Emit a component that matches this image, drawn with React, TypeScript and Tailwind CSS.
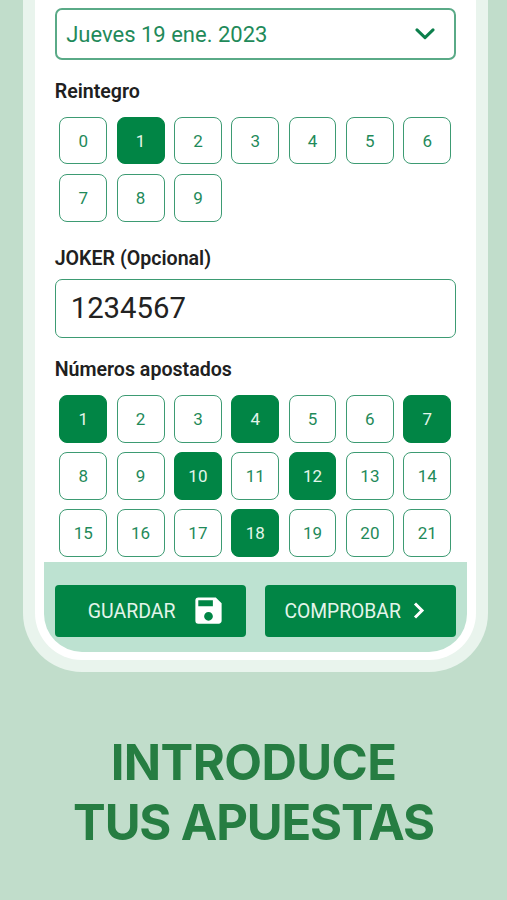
import React from "react";
import clsx from "clsx";
import { MdSave } from "react-icons/md";

const refunds = [0, 1, 2, 3, 4, 5, 6, 7, 8, 9];
const numbers = Array.from({ length: 21 }, (_, i) => i + 1);

function NumberGrid({ items, selected }: { items: number[]; selected: number[] }) {
  return (
    <div className="grid grid-cols-7 gap-[9.5px] px-[4.7px]">
      {items.map((item) => (
        <button
          key={item}
          className={clsx(
            "flex h-[47.7px] items-center justify-center rounded-[8px] border-[1.5px] pt-[1.5px] text-[17px]",
            selected.includes(item)
              ? "border-[#018545] bg-[#018545] text-[#e3f5ea]"
              : "border-[#3d9b73] bg-white text-[#1f8a5a]"
          )}
        >
          {item}
        </button>
      ))}
    </div>
  );
}

function Label({ children }: { children: React.ReactNode }) {
  return <h3 className="pt-px text-[19.6px] font-semibold leading-[23px] text-[#202020]">{children}</h3>;
}

export default function App() {
  return (
    <div className="flex h-[900px] w-[507px] flex-col overflow-hidden bg-[#c1ddcb] font-['Roboto',sans-serif]">
      {/* Phone frame */}
      <div className="ml-[23px] h-[672px] w-[464.5px] shrink-0 rounded-b-[59px] bg-[#e9f4ed] px-3 pb-3">
        <div className="h-[660px] rounded-b-[47px] bg-white px-[8.5px] pb-[8.5px]">
          <div className="flex h-[651.5px] flex-col overflow-hidden rounded-b-[38px]">
            <div className="h-[562px] px-[11.2px] pt-2">
              <button className="flex h-[51.5px] w-full items-center justify-between rounded-[7px] border-2 border-[#5aaa87] pl-[9.5px] pr-[19px] text-[22px] text-[#1f8a5a]">
                <span className="pt-[1.5px]">Jueves 19 ene. 2023</span>
                <svg className="h-[13px] w-[20px]" viewBox="0 0 20 13" fill="none" stroke="#0c7f4c" strokeWidth="3" strokeLinecap="round" strokeLinejoin="round">
                  <path d="M2 2.9 10 10.6 18 2.9" />
                </svg>
              </button>

              <div className="mt-[19.5px] mb-[13.7px]">
                <Label>Reintegro</Label>
              </div>
              <NumberGrid items={refunds} selected={[1]} />

              <div className="mt-[24.8px] mb-[8.5px]">
                <Label>JOKER (Opcional)</Label>
              </div>
              <div className="flex h-[59px] items-center rounded-[7px] border-[1.5px] border-[#3d9b73] px-[15px] pt-[1.5px] text-[29.3px] text-[#222]">
                1234567
              </div>

              <div className="mt-[19.5px] mb-[13.5px]">
                <Label>Números apostados</Label>
              </div>
              <NumberGrid items={numbers} selected={[1, 4, 7, 10, 12, 18]} />
            </div>

            <div className="grid flex-1 grid-cols-2 items-start gap-[19.3px] bg-[#bde2d1] px-[11.2px] pt-[23px]">
              <button className="flex h-[51.7px] items-center gap-[15.5px] rounded-[4px] bg-[#018545] pl-[33px] text-[19.5px] text-[#e3f5ea]">
                <span className="pt-px">GUARDAR</span>
                <MdSave className="size-[35px] text-white" />
              </button>
              <button className="flex h-[51.7px] items-center gap-[12px] rounded-[4px] bg-[#018545] pl-[19.5px] text-[19.3px] text-[#e3f5ea]">
                <span className="pt-[2.5px]">COMPROBAR</span>
                <svg className="h-[17px] w-[12px]" viewBox="0 0 12 17" fill="none" stroke="white" strokeWidth="3">
                  <path d="M2 1.5 9 8.5 2 15.5" />
                </svg>
              </button>
            </div>
          </div>
        </div>
      </div>

      <h1 className="mt-[60.5px] text-center font-['Inter',sans-serif] text-[49px] font-bold leading-[60px] tracking-[-1.15px] text-[#267d42]">
        <span className="tracking-[-0.6px]">INTRODUCE</span>
        <br />
        TUS APUESTAS
      </h1>
    </div>
  );
}
